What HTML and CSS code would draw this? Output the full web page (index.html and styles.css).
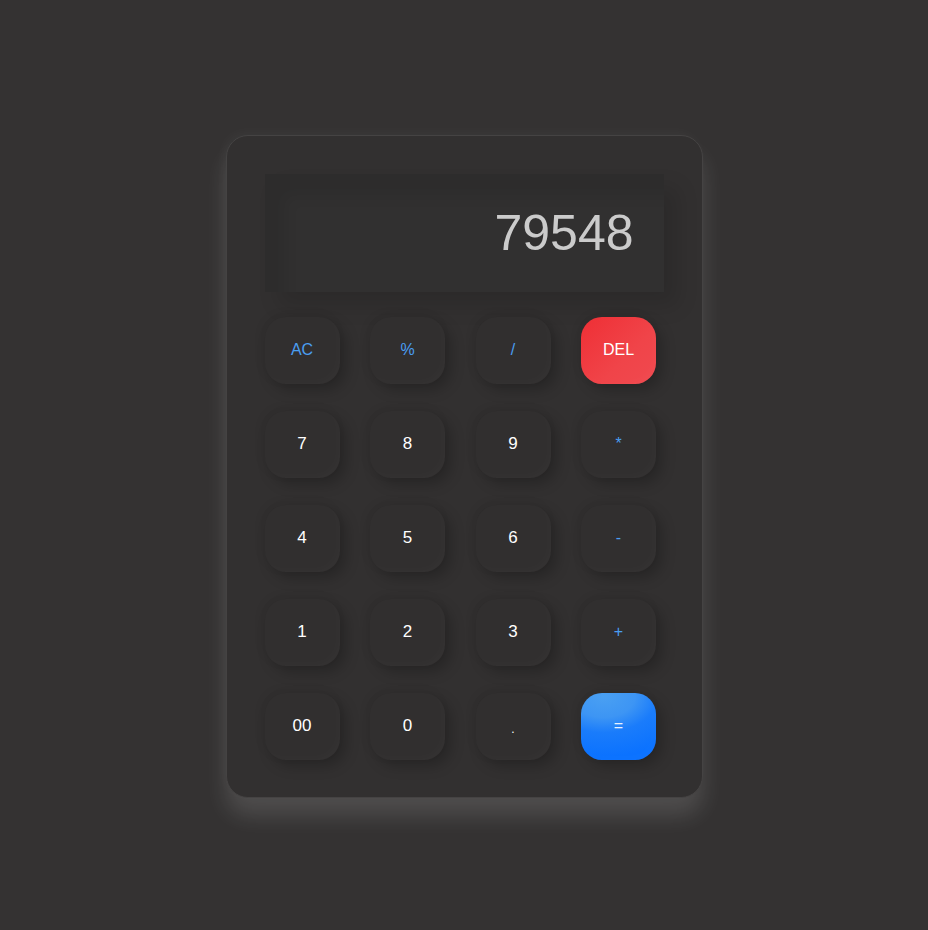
FILE: index.html
```html
<!DOCTYPE html>
<html lang="en">
<head>
<meta charset="utf-8">
<title>Calculator</title>
<link rel="stylesheet" href="styles.css">
</head>
<body>
<div class="calculator">
  <div class="display"><span class="value">79548</span></div>
  <div class="keys">
    <button class="key op">AC</button>
    <button class="key op">%</button>
    <button class="key op">/</button>
    <button class="key del">DEL</button>
    <button class="key">7</button>
    <button class="key">8</button>
    <button class="key">9</button>
    <button class="key op">*</button>
    <button class="key">4</button>
    <button class="key">5</button>
    <button class="key">6</button>
    <button class="key op">-</button>
    <button class="key">1</button>
    <button class="key">2</button>
    <button class="key">3</button>
    <button class="key op">+</button>
    <button class="key">00</button>
    <button class="key">0</button>
    <button class="key dot">.</button>
    <button class="key equal">=</button>
  </div>
</div>
</body>
</html>
```
FILE: styles.css
```css
* { box-sizing: border-box; }
html, body { height: 100%; }
body {
  margin: 0;
  background: #343232;
  font-family: "Liberation Sans", Arial, sans-serif;
  display: flex;
  align-items: center;
  justify-content: center;
}
.calculator {
  width: 477px;
  padding: 38px 38px 37px 38px;
  background: #323030;
  border: 1px solid #454343;
  border-radius: 22px;
  box-shadow: 0 18px 22px rgba(255, 255, 255, 0.13), -3px -3px 12px rgba(255, 255, 255, 0.03);
  margin-top: 2px;
}
.display {
  height: 118px;
  background: #313030;
  display: flex;
  align-items: center;
  justify-content: flex-end;
  padding-right: 30px;
  box-shadow: inset 20px 22px 14px rgba(0, 0, 0, 0.08), 14px 14px 20px rgba(0, 0, 0, 0.12);
}
.value {
  font-size: 50px;
  color: #cbcbcb;
}
.keys {
  margin-top: 25px;
  display: grid;
  grid-template-columns: repeat(4, 75px);
  column-gap: 30.5px;
  row-gap: 27px;
}
.key {
  width: 75px;
  height: 67px;
  border: none;
  border-radius: 21px;
  background: #312f2f;
  color: #ffffff;
  font-family: "Liberation Sans", Arial, sans-serif;
  font-size: 17px;
  padding: 0;
  box-shadow: 6px 6px 14px rgba(0, 0, 0, 0.22), -3px -3px 10px rgba(0, 0, 0, 0.06), inset -4px -4px 8px rgba(255, 255, 255, 0.015);
}
.op {
  color: #4a9ef2;
  font-size: 16px;
}
.dot {
  font-size: 12px;
  padding-top: 6px;
}
.del {
  background: linear-gradient(135deg, #ef2f35 0%, #f04449 60%, #f0494f 100%);
  color: #fff;
  font-size: 16px;
}
.equal {
  background: radial-gradient(ellipse 120% 90% at 30% 5%, #4aa0f2 0%, #3d95f4 35%, #1a7cfb 60%, #0b72ff 100%);
  color: #e8f2ff;
  font-size: 16px;
}
```
